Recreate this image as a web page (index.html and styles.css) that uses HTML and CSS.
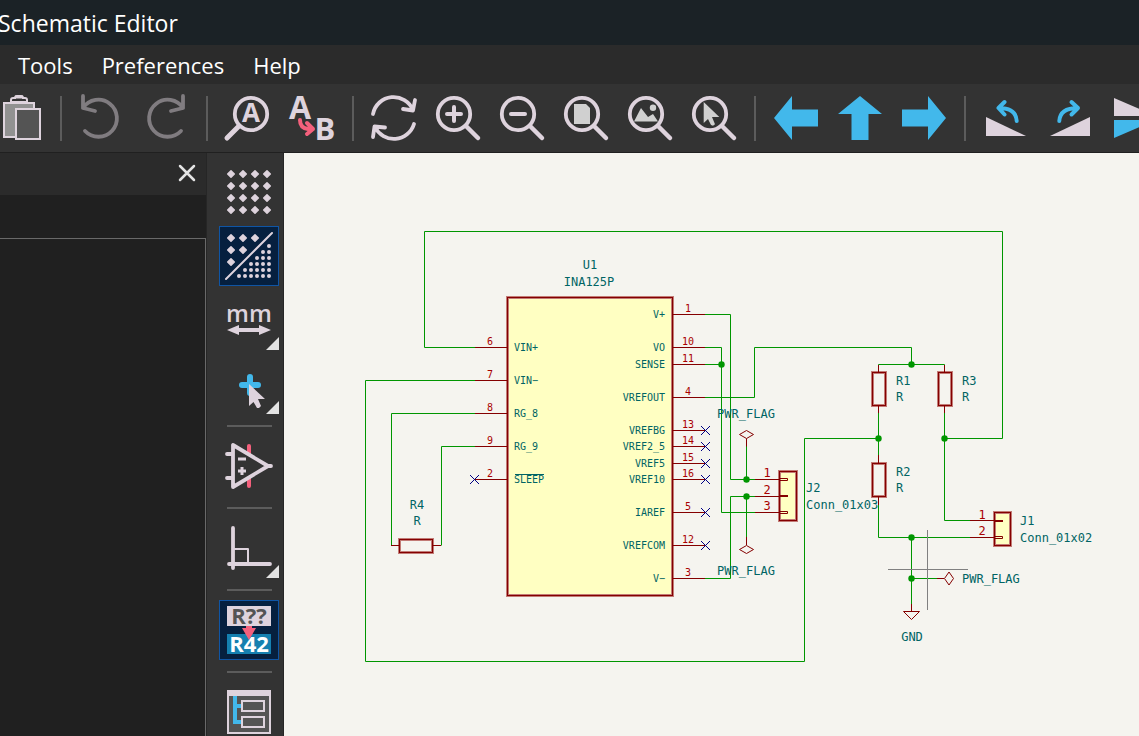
FILE: index.html
```html
<!DOCTYPE html>
<html lang="en">
<head>
<meta charset="utf-8">
<title>Schematic Editor</title>
<link rel="stylesheet" href="styles.css">
</head>
<body>
<header class="titlebar">Schematic Editor</header>
<nav class="menubar">
  <button class="menu">Tools</button>
  <button class="menu">Preferences</button>
  <button class="menu">Help</button>
</nav>
<div class="toolbar">
  <button class="tool" aria-label="Paste"><svg class="icon" viewBox="0 0 48 48"><path d="M9 9h30v34H9z" fill="#919191" stroke="#ded3dd" stroke-width="2"/><path d="M16 8V6q0-2 2-2h2q0-2 2-2h4q2 0 2 2h2q2 0 2 2v2z" fill="#333" stroke="#ded3dd" stroke-width="2"/><path d="M20 3h8" stroke="#ded3dd" stroke-width="3"/><path d="M21 15h24v30H21z" fill="#545454" stroke="#ded3dd" stroke-width="2"/></svg></button>
  <span class="sep"></span>
  <button class="tool" aria-label="Undo"><svg class="icon line dim" viewBox="0 0 48 48"><path d="M6 2v12l12 3M6 14A18.5 18.5 0 1 1 8 37"/></svg></button>
  <button class="tool" aria-label="Redo"><svg class="icon line dim" viewBox="0 0 48 48"><path d="M42 2v12l-12 3M42 14A18.5 18.5 0 1 0 40 37"/></svg></button>
  <span class="sep"></span>
  <button class="tool" aria-label="Find"><svg class="icon line" viewBox="0 0 48 48"><circle cx="28" cy="20" r="16.2"/><path d="M16 32 4 44" stroke-width="5"/><text class="glyph" x="28" y="28" font-size="26">A</text></svg></button>
  <button class="tool" aria-label="Find and replace"><svg class="icon" viewBox="0 0 48 48"><text class="glyph" x="13" y="25" font-size="32">A</text><text class="glyph" x="38" y="46" font-size="31">B</text><path d="M13 26q0 8 8 9h5M20 29l6 6-6 5" fill="none" stroke="#f4607c" stroke-width="4" stroke-linecap="round" stroke-linejoin="round"/></svg></button>
  <span class="sep"></span>
  <button class="tool" aria-label="Refresh"><svg class="icon line" viewBox="0 0 48 48"><path d="M4 20A21 21 0 0 1 44 16M46 6l-2 10.500-10-1.500M45 30A21 21 0 0 1 6 33M4 43l1.500-10.500L16 33.500"/></svg></button>
  <button class="tool" aria-label="Zoom in"><svg class="icon line" viewBox="0 0 48 48"><circle cx="21" cy="20" r="16.2"/><path d="M33 32 45 44" stroke-width="4.500"/><path d="M14 20h14M21 13v14" stroke-width="4"/></svg></button>
  <button class="tool" aria-label="Zoom out"><svg class="icon line" viewBox="0 0 48 48"><circle cx="21" cy="20" r="16.2"/><path d="M33 32 45 44" stroke-width="4.500"/><path d="M14 20h14" stroke-width="4"/></svg></button>
  <button class="tool" aria-label="Zoom to page"><svg class="icon line" viewBox="0 0 48 48"><circle cx="21" cy="20" r="16.2"/><path d="M33 32 45 44" stroke-width="4.500"/><path class="flat" d="M13 10h12l4 4v16H13z"/></svg></button>
  <button class="tool" aria-label="Zoom to objects"><svg class="icon line" viewBox="0 0 48 48"><path class="flat" d="M9 27.500 16 14l7 9 5-3 5 7.500z"/><circle class="flat" cx="28" cy="13.700" r="3.200"/><circle cx="21" cy="20" r="16.2"/><path d="M33 32 45 44" stroke-width="4.500"/></svg></button>
  <button class="tool" aria-label="Zoom to selection"><svg class="icon line" viewBox="0 0 48 48"><circle cx="21" cy="20" r="16.2"/><path d="M33 32 45 44" stroke-width="4.500"/><path class="flat" d="M14.700 8v21l4.300-4 3 6 2 .7 2-1.400-3-7.300h7.300z"/></svg></button>
  <span class="sep"></span>
  <button class="tool" aria-label="Back"><svg class="icon" viewBox="0 0 48 48"><path fill="#42b8eb" d="M3 24 21 2v13.500h26v17H21V46z"/></svg></button>
  <button class="tool" aria-label="Up"><svg class="icon" viewBox="0 0 48 48"><path fill="#42b8eb" d="M25 2 47 20H33.500v26h-17V20H3z"/></svg></button>
  <button class="tool" aria-label="Forward"><svg class="icon" viewBox="0 0 48 48"><path fill="#42b8eb" d="M47 24 29 2v13.500H3v17h26V46z"/></svg></button>
  <span class="sep"></span>
  <button class="tool" aria-label="Rotate left"><svg class="icon" viewBox="0 0 48 48"><path fill="#ded3dd" d="M5 23v19h40z"/><path class="turn" d="M23.500 8 17.500 14l6 6.500M18 14q17 0 17.700 13"/></svg></button>
  <button class="tool" aria-label="Rotate right"><svg class="icon" viewBox="0 0 48 48"><path fill="#ded3dd" d="M45 23v19H5z"/><path class="turn" d="M26.500 8l6.500 6-6.500 6.500M33 14q-18 0-18.700 13"/></svg></button>
  <button class="tool" aria-label="Mirror vertically"><svg class="icon" viewBox="0 0 48 48"><path fill="#ded3dd" d="M5 4v18h42z"/><path fill="#42b8eb" d="M5 44V26h42z"/></svg></button>
</div>
<div class="workspace">
  <aside class="panel">
    <div class="panel-head"><button class="close" aria-label="Close"><svg class="close-icon" viewBox="0 0 18 18"><path d="M2 2l14 14M16 2 2 16" stroke="#e3e3e3" stroke-width="2.500" stroke-linecap="round"/></svg></button></div>
    <div class="panel-list"></div>
  </aside>
  <div class="sidebar">
    <button class="side" aria-label="Show grid"><svg class="icon" viewBox="0 0 48 48"><defs><path id="d" fill="#ded3dd" stroke="#ded3dd" stroke-width="1.500" stroke-linejoin="round" d="M0-3.300 3.300 0 0 3.300-3.300 0z"/><g id="row"><use href="#d" x="6"/><use href="#d" x="18"/><use href="#d" x="30"/><use href="#d" x="42"/></g></defs><use href="#row" y="6"/><use href="#row" y="18"/><use href="#row" y="30"/><use href="#row" y="42"/></svg></button>
    <button class="side on" aria-label="Grid overrides" aria-pressed="true"><svg class="icon line" viewBox="0 0 48 48"><use href="#d" x="6" y="6"/><use href="#d" x="18" y="6"/><use href="#d" x="30" y="6"/><use href="#d" x="6" y="18"/><use href="#d" x="18" y="18"/><use href="#d" x="6" y="30"/><path d="M1 47 47 1" stroke-width="2"/><path stroke-width="4" stroke-dasharray="0 6" d="M14 44h30.100M20 38h24.100M26 32h18.100M32 26h12.100M38 20h6.100M44 14h.1"/></svg></button>
    <button class="side more" aria-label="Millimeters"><svg class="icon" viewBox="0 0 48 48"><text class="glyph medium" x="24" y="26" font-size="24">mm</text><path fill="#ded3dd" d="M2 34l12-5v3h20v-3l12 5-12 5v-3H14v3z"/></svg></button>
    <button class="side more" aria-label="Cursor shape"><svg class="icon" viewBox="0 0 48 48"><path d="M17 25h16M25 17v16" stroke="#42b8eb" stroke-width="6" stroke-linecap="round"/><path fill="#ded3dd" d="M24 24v22l4.500-4 3.500 6 2 0 2-2-3-7h7z"/></svg></button>
    <span class="side-sep"></span>
    <button class="side" aria-label="Hidden pins"><svg class="icon line" viewBox="0 0 48 48"><path d="M24 4v40" stroke="#f4607c" stroke-width="4"/><path d="M2 12h6M2 36h6M43 24h3"/><path d="M8 3v42L43 24z" fill="#333"/><path d="M13 17h8M17 25v8M13 29h8" stroke-width="3" stroke-linecap="butt"/></svg></button>
    <span class="side-sep"></span>
    <button class="side more" aria-label="Line mode"><svg class="icon line" viewBox="0 0 48 48"><path d="M8 4v40M4 40h41"/><path d="M9 25h14v14" stroke-width="2"/></svg></button>
    <span class="side-sep"></span>
    <button class="side on" aria-label="Annotate automatically" aria-pressed="true"><svg class="icon" viewBox="0 0 48 48"><path fill="#ded3dd" d="M2 0h44v20H2z"/><path fill="#1580b0" d="M2 28h44v20H2z"/><text class="glyph dark" x="24" y="18" font-size="22">R??</text><text class="glyph white" x="24" y="46" font-size="22">R42</text><path fill="#f4607c" d="M21 20h6v2h4l-7 12-7-12h4z"/></svg></button>
    <span class="side-sep"></span>
    <button class="side" aria-label="Hierarchy navigator"><svg class="icon" viewBox="0 0 48 48"><path fill="#545454" stroke="#ded3dd" stroke-width="2" d="M3 3h42v42H3z"/><path fill="#ded3dd" d="M2 2h44v6H2z"/><path d="M10 8v26h6M10 18h6" fill="none" stroke="#42b8eb" stroke-width="4"/><path fill="none" stroke="#ded3dd" stroke-width="2" d="M17 13h22v10H17zM17 29h22v10H17z"/></svg></button>
  </div>
  <main class="canvas">
    <svg class="sheet" role="img" aria-label="INA125P schematic">
      <defs>
        <path id="nc" class="nc" d="M-4.500-4.500l9 9M4.500-4.500l-9 9"/>
        <circle id="j" r="3.200" fill="#009600"/>
      </defs>
      <g transform="translate(-284 -153)">
        <g class="body">
          <rect x="507.500" y="297.500" width="165" height="298"/>
          <rect x="779.500" y="471.500" width="17" height="49"/>
          <rect x="994.500" y="512.500" width="16" height="33"/>
          <g class="open">
            <rect x="399.500" y="539.500" width="33" height="13"/>
            <rect x="872.500" y="372.500" width="13" height="33"/>
            <rect x="938.500" y="372.500" width="13" height="33"/>
            <rect x="872.500" y="463.500" width="13" height="33"/>
          </g>
        </g>
        <g class="core">
          <rect x="507.500" y="297.500" width="165" height="298"/>
          <rect x="779.500" y="471.500" width="17" height="49"/>
          <rect x="994.500" y="512.500" width="16" height="33"/>
          <rect x="399.500" y="539.500" width="33" height="13"/>
          <rect x="872.500" y="372.500" width="13" height="33"/>
          <rect x="938.500" y="372.500" width="13" height="33"/>
          <rect x="872.500" y="463.500" width="13" height="33"/>
        </g>
        <path class="wire" d="M475 347.500H424.500V231.500H1002.500V438.500H944.500M475 380.500H365.500V661.500H804.500V438.500H878.500M475 413.500H391.500V545.500M475 446.500H441.500V545.500M705 314.500H730.500V479.500H755M705 347.500H721.500V512.500H755M705 364.500H721.500M705 397.500H754.500V347.500H911.500V364.500M878.500 365V364.500H944.500V365M705 578.500H730.500V496.500H755M746.500 446V479.500M746.500 496.500V537M878.500 413V455M878.500 505V537.500H970M944.500 413V520.500H970M911.500 537.500V604M911.500 578.500H937"/>
        <path class="pin" d="M475 347.500h32M475 380.500h32M475 413.500h32M475 446.500h32M475 479.500h32M673 314.500h32M673 347.500h32M673 364.500h32M673 397.500h32M673 430.500h32M673 446.500h32M673 463.500h32M673 479.500h32M673 512.500h32M673 545.500h32M673 578.500h32M391 545.500h8M433 545.500h8M878.500 365v7M878.500 406v7M944.500 365v7M944.500 406v7M878.500 455v8M878.500 497v8M755 479.500h24M755 496.500h24M755 512.500h24M970 520.500h24M970 537.500h24M746.500 438.500v8M746.500 537v8M911.500 604v7M937 578.500h7"/>
        <path class="pin" d="M739.500 434.500l7-4 7 4-7 4zM739.500 549.500l7-4 7 4-7 4zM944.500 578.500l4.500-6.500 4.500 6.500-4.500 6.500zM903.500 611.500h16l-8 8zM780 478.500h7.500v2H780M780 495.500h8M780 496.500h8M780 511.500h7.500v2H780M995 520.500h8M995 521.500h8M995 536.500h7.500v2H995"/>
        <use href="#j" x="721.500" y="364.500"/><use href="#j" x="911.500" y="364.500"/><use href="#j" x="746.500" y="479.500"/><use href="#j" x="746.500" y="496.500"/><use href="#j" x="878.500" y="438.500"/><use href="#j" x="944.500" y="438.500"/><use href="#j" x="911.500" y="537.500"/><use href="#j" x="911.500" y="578.500"/>
        <use href="#nc" x="474.500" y="479.500"/><use href="#nc" x="705.500" y="430.500"/><use href="#nc" x="705.500" y="446.500"/><use href="#nc" x="705.500" y="463.500"/><use href="#nc" x="705.500" y="479.500"/><use href="#nc" x="705.500" y="512.500"/><use href="#nc" x="705.500" y="545.500"/>
        <g class="num">
          <text x="490" y="345">6</text><text x="490" y="378">7</text><text x="490" y="411">8</text><text x="490" y="444">9</text><text x="490" y="477">2</text>
          <text x="688" y="312">1</text><text x="688" y="345">10</text><text x="688" y="362">11</text><text x="688" y="395">4</text><text x="688" y="428">13</text><text x="688" y="444">14</text><text x="688" y="461">15</text><text x="688" y="477">16</text><text x="688" y="510">5</text><text x="688" y="543">12</text><text x="688" y="576">3</text>
        </g>
        <g class="num big">
          <text x="767" y="477">1</text><text x="767" y="494">2</text><text x="767" y="510">3</text><text x="982" y="519">1</text><text x="982" y="535">2</text>
        </g>
        <g class="name">
          <text x="514" y="351">VIN+</text><text x="514" y="384">VIN−</text><text x="514" y="417">RG_8</text><text x="514" y="450">RG_9</text><text x="514" y="483">SLEEP</text>
          <path d="M515 474.500h29" stroke="#006464"/>
        </g>
        <g class="name end">
          <text x="665" y="318">V+</text><text x="665" y="351">VO</text><text x="665" y="368">SENSE</text><text x="665" y="401">VREFOUT</text><text x="665" y="434">VREFBG</text><text x="665" y="450">VREF2_5</text><text x="665" y="467">VREF5</text><text x="665" y="483">VREF10</text><text x="665" y="516">IAREF</text><text x="665" y="549">VREFCOM</text><text x="665" y="582">V−</text>
        </g>
        <g class="label mid">
          <text x="590" y="269">U1</text><text x="589" y="286">INA125P</text><text x="417" y="509">R4</text><text x="417" y="525">R</text><text x="746" y="418">PWR_FLAG</text><text x="746" y="575">PWR_FLAG</text><text x="912" y="641">GND</text>
        </g>
        <g class="label">
          <text x="896" y="385">R1</text><text x="896" y="401">R</text><text x="962" y="385">R3</text><text x="962" y="401">R</text><text x="896" y="476">R2</text><text x="896" y="492">R</text><text x="806" y="492">J2</text><text x="806" y="509">Conn_01x03</text><text x="1020" y="525">J1</text><text x="1020" y="542">Conn_01x02</text><text x="962" y="583">PWR_FLAG</text>
        </g>
        <path d="M927.500 530v80M888 569.500h80" stroke="#808080"/>
      </g>
    </svg>
  </main>
</div>
</body>
</html>
```

FILE: styles.css
```css
* { box-sizing: border-box; }
body {
  margin: 0;
  height: 100vh;
  display: flex;
  flex-direction: column;
  overflow: hidden;
  background: #333;
  color: #fff;
  font-family: "Open Sans", "Noto Sans", sans-serif;
}
button {
  margin: 0;
  padding: 0;
  border: 0;
  background: none;
  color: inherit;
  font: inherit;
}
.titlebar {
  flex: none;
  height: 45px;
  line-height: 46px;
  margin-left: -2px;
  font-size: 23px;
  background: #1b2226;
  white-space: nowrap;
}
.menubar {
  flex: none;
  display: flex;
  gap: 29px;
  height: 39px;
  padding-left: 18px;
  background: #2b2b2b;
}
.menu { font-size: 22px; line-height: 40px; }
.toolbar {
  flex: none;
  display: flex;
  align-items: center;
  height: 69px;
  margin-left: -13px;
  border-bottom: 1px solid #202020;
  overflow: hidden;
}
.tool {
  flex: none;
  width: 64px;
  height: 64px;
  display: flex;
  align-items: center;
  justify-content: center;
}
.sep {
  flex: none;
  width: 2px;
  height: 45px;
  margin: 0 7px 0 9px;
  background: #5c5c5c;
}
.icon { display: block; width: 48px; height: 48px; overflow: visible; }
.line {
  fill: none;
  stroke: #ded3dd;
  stroke-width: 3.8px;
  stroke-linecap: round;
  stroke-linejoin: round;
}
.dim { stroke: #807c80; }
.flat { fill: #d0d0d0; stroke: none; }
.turn {
  fill: none;
  stroke: #42b8eb;
  stroke-width: 4px;
  stroke-linecap: round;
  stroke-linejoin: round;
}
.glyph {
  fill: #ded3dd;
  stroke: none;
  font-weight: 700;
  text-anchor: middle;
}
.medium { font-weight: 600; }
.dark { fill: #545454; }
.white { fill: #fff; }
.workspace { flex: 1; min-height: 0; display: flex; }
.panel {
  flex: none;
  width: 206px;
  display: flex;
  flex-direction: column;
  background: #202020;
}
.panel-head {
  height: 42px;
  margin-bottom: 43px;
  padding: 0 10px 2px 0;
  display: flex;
  align-items: center;
  justify-content: flex-end;
  background: #2b2b2b;
}
.close { display: flex; }
.close-icon { width: 18px; height: 18px; }
.panel-list {
  flex: 1;
  border-top: 1px solid #696969;
  border-right: 1px solid #696969;
}
.sidebar {
  flex: none;
  width: 78px;
  padding-top: 7px;
  display: flex;
  flex-direction: column;
  align-items: center;
  padding-left: 8px;
  border-left: 1px solid #262626;
  border-right: 1px solid #262626;
  overflow: hidden;
}
.side {
  position: relative;
  flex: none;
  width: 60px;
  height: 60px;
  margin: 2px 0;
  display: flex;
  align-items: center;
  justify-content: center;
  border: 1px solid transparent;
}
.on { border-color: #0f55a5; background: #06203f; }
.more::after {
  content: "";
  position: absolute;
  right: -1px;
  bottom: -1px;
  width: 13px;
  height: 13px;
  background: #e3e3e3;
  clip-path: polygon(100% 0, 100% 100%, 0 100%);
}
.side-sep {
  flex: none;
  width: 45px;
  height: 2px;
  margin: 9px 0 7px;
  background: #5c5c5c;
}
.canvas { flex: 1; min-width: 0; background: #f5f4ef; }
.sheet {
  display: block;
  width: 100%;
  height: 100%;
  font-family: "DejaVu Sans Mono", monospace;
}
.body { fill: #ffffc2; stroke: #c27b76; stroke-width: 3px; }
.open { fill: none; }
.core { fill: none; stroke: #840000; stroke-width: 1px; }
.wire { fill: none; stroke: #009600; }
.pin { fill: none; stroke: #840000; }
.nc { stroke: #000084; }
.num { fill: #a90000; font-size: 10px; text-anchor: middle; }
.big { font-size: 12px; }
.name { fill: #006464; font-size: 10px; }
.end { text-anchor: end; }
.label { fill: #006464; font-size: 12px; }
.mid { text-anchor: middle; }
```
